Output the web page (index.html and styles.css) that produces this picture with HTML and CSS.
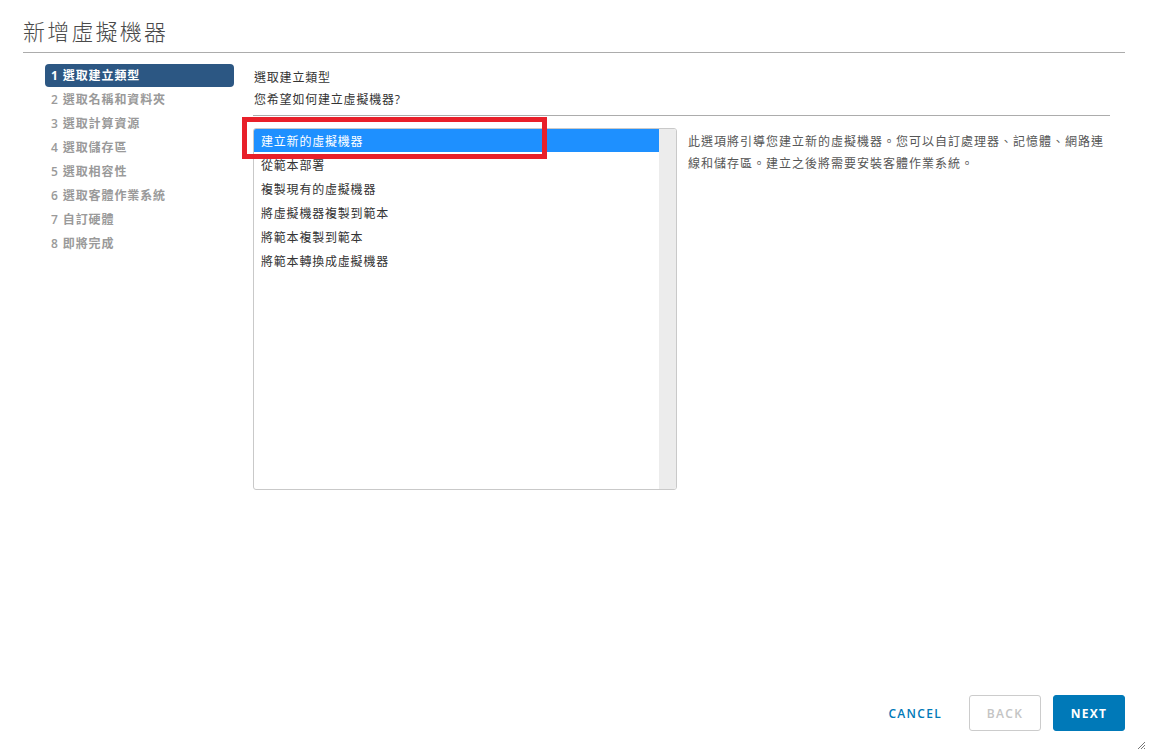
FILE: index.html
```html
<!DOCTYPE html>
<html lang="zh-Hant">
<head>
<meta charset="utf-8">
<title>新增虛擬機器</title>
<link rel="stylesheet" href="styles.css">
</head>
<body>
<div class="modal">
  <header class="header">
    <h1 class="title">新增虛擬機器</h1>
  </header>
  <div class="body">
    <nav class="steps">
      <div class="step active">1 選取建立類型</div>
      <div class="step">2 選取名稱和資料夾</div>
      <div class="step">3 選取計算資源</div>
      <div class="step">4 選取儲存區</div>
      <div class="step">5 選取相容性</div>
      <div class="step">6 選取客體作業系統</div>
      <div class="step">7 自訂硬體</div>
      <div class="step">8 即將完成</div>
    </nav>
    <main class="content">
      <div class="page-title">選取建立類型</div>
      <div class="page-sub">您希望如何建立虛擬機器?</div>
      <div class="panel">
        <div class="listbox">
          <ul class="options">
            <li class="option selected">建立新的虛擬機器</li>
            <li class="option">從範本部署</li>
            <li class="option">複製現有的虛擬機器</li>
            <li class="option">將虛擬機器複製到範本</li>
            <li class="option">將範本複製到範本</li>
            <li class="option">將範本轉換成虛擬機器</li>
          </ul>
          <div class="scrollbar"></div>
        </div>
        <p class="desc">此選項將引導您建立新的虛擬機器。您可以自訂處理器、記憶體、網路連線和儲存區。建立之後將需要安裝客體作業系統。</p>
      </div>
    </main>
  </div>
  <footer class="footer">
    <button class="btn btn-link">CANCEL</button>
    <button class="btn btn-outline" disabled>BACK</button>
    <button class="btn btn-primary">NEXT</button>
  </footer>
  <div class="highlight"></div>
  <svg class="grip" width="9" height="9" viewBox="0 0 9 9"><path d="M8 1 L1 8 M8 4 L4 8 M8 7 L7 8" stroke="#777" stroke-width="1" fill="none"/></svg>
</div>
</body>
</html>
```
FILE: styles.css
```css
* { box-sizing: border-box; }
html, body { margin: 0; padding: 0; background: #fff; }
body {
  font-family: "Open Sans", "Noto Sans CJK TC", sans-serif;
  color: #333;
  width: 1149px;
  height: 753px;
  overflow: hidden;
}
.modal {
  position: relative;
  height: 753px;
  display: flex;
  flex-direction: column;
  padding: 0 24px 0 23px;
}
.header {
  height: 53px;
  border-bottom: 1px solid #acacac;
  display: flex;
  align-items: flex-end;
}
.title {
  margin: 0 0 7px 0;
  font-family: "Noto Sans CJK TC", sans-serif;
  font-weight: 300;
  font-size: 22px;
  line-height: 30px;
  letter-spacing: 2.2px;
  color: #4a4a4a;
}
.body {
  flex: 1;
  display: flex;
  padding-top: 11px;
}
.steps {
  width: 189px;
  margin-left: 22px;
  display: flex;
  flex-direction: column;
}
.step {
  height: 24px;
  line-height: 24px;
  padding-left: 6px;
  font-size: 12px;
  font-weight: 600;
  letter-spacing: 0.9px;
  color: #9a9a9a;
  border-radius: 4px;
}
.step.active {
  height: 23px;
  line-height: 23px;
  background: #2c5783;
  color: #fff;
  font-weight: 700;
  margin-bottom: 1px;
}
.content {
  flex: 1;
  margin-left: 19px;
  margin-right: 15px;
  padding-top: 3px;
  display: flex;
  flex-direction: column;
}
.page-title, .page-sub {
  font-size: 12px;
  line-height: 22px;
  letter-spacing: 0.8px;
  color: #333;
  padding-left: 1px;
}
.page-sub {
  padding-bottom: 4px;
  border-bottom: 1px solid #acacac;
}
.panel {
  display: flex;
  margin-top: 12px;
}
.listbox {
  width: 424px;
  height: 362px;
  border: 1px solid #c9c9c9;
  border-radius: 3px;
  display: flex;
  overflow: hidden;
}
.options {
  list-style: none;
  margin: 0;
  padding: 0;
  flex: 1;
}
.option {
  height: 24px;
  line-height: 24px;
  padding-left: 7px;
  padding-top: 1px;
  font-size: 12px;
  letter-spacing: 0.8px;
  color: #333;
}
.option.selected {
  height: 23px;
  line-height: 23px;
  margin-bottom: 1px;
  background: #1e90ff;
  color: #fff;
}
.scrollbar {
  width: 17px;
  background: #ececec;
}
.desc {
  flex: 1;
  margin: 3px 0 0 11px;
  font-size: 12px;
  line-height: 22px;
  letter-spacing: 1px;
  color: #565656;
}
.footer {
  display: flex;
  justify-content: flex-end;
  gap: 12px;
  padding-bottom: 22px;
}
.btn {
  height: 36px;
  min-width: 72px;
  border-radius: 3px;
  font-family: "Open Sans", sans-serif;
  font-size: 12px;
  font-weight: 600;
  letter-spacing: 1.3px;
  border: 1px solid transparent;
  background: none;
  padding: 0 12px;
}
.btn-link {
  color: #0079b8;
  padding: 0 14px;
}
.btn-outline {
  border-color: #cccccc;
  color: #c4c4c4;
  background: #fff;
}
.btn-primary {
  background: #0079b8;
  border-color: #0079b8;
  color: #fff;
  font-weight: 700;
}
.highlight {
  position: absolute;
  left: 242px;
  top: 117px;
  width: 305px;
  height: 42px;
  border: 5px solid #e8202a;
}
.grip {
  position: absolute;
  right: 3px;
  bottom: 3px;
}
```
